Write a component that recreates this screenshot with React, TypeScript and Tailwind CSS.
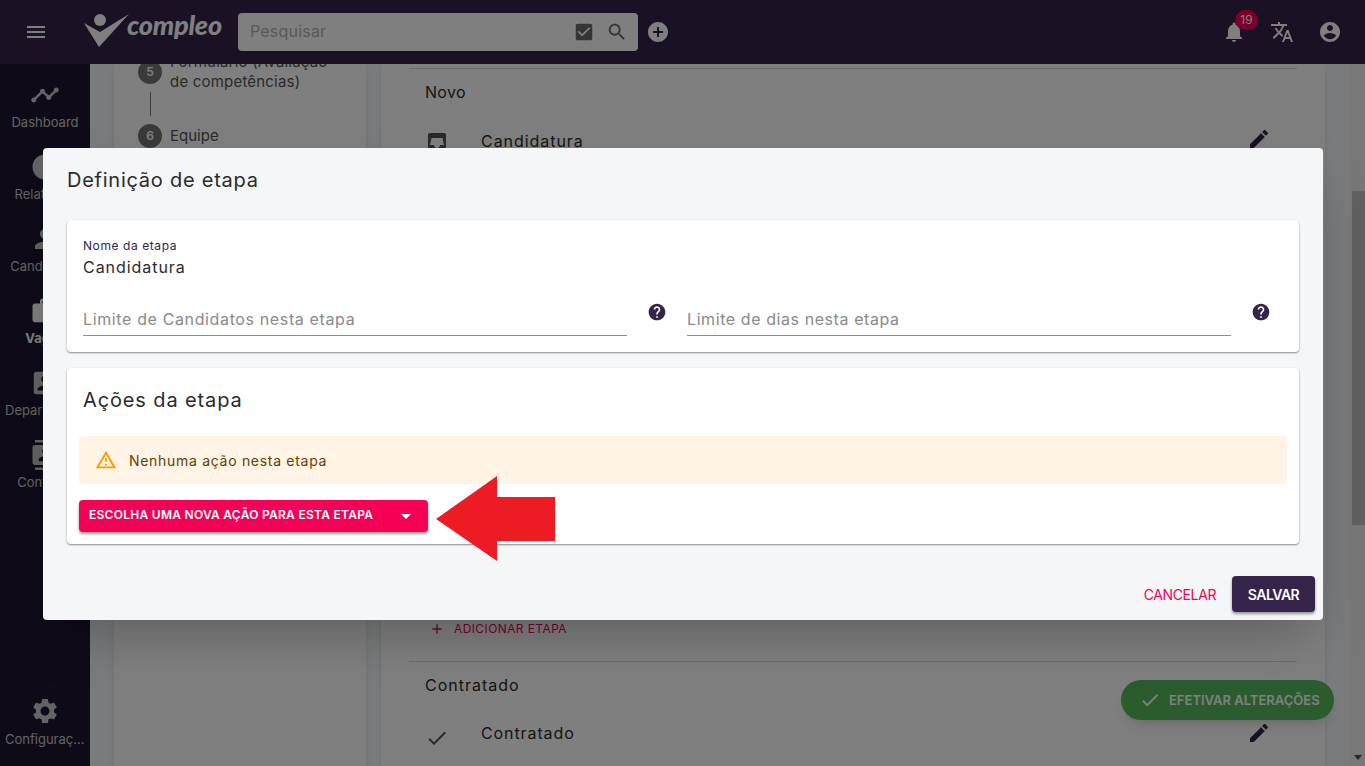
import React from "react";

const P = {
  menu: "M3 18h18v-2H3v2zm0-5h18v-2H3v2zm0-7v2h18V6H3z",
  checkBox: "M19 3H5c-1.11 0-2 .9-2 2v14c0 1.1.89 2 2 2h14c1.11 0 2-.9 2-2V5c0-1.1-.89-2-2-2zm-9 14l-5-5 1.41-1.41L10 14.17l7.59-7.59L19 8l-9 9z",
  search: "M15.5 14h-.79l-.28-.27C15.41 12.59 16 11.11 16 9.5 16 5.91 13.09 3 9.5 3S3 5.91 3 9.5 5.91 16 9.5 16c1.61 0 3.09-.59 4.23-1.57l.27.28v.79l5 4.99L20.49 19l-4.99-5zm-6 0C7.01 14 5 11.99 5 9.5S7.01 5 9.5 5 14 7.01 14 9.5 11.99 14 9.5 14z",
  addCircle: "M12 2C6.48 2 2 6.48 2 12s4.48 10 10 10 10-4.48 10-10S17.52 2 12 2zm5 11h-4v4h-2v-4H7v-2h4V7h2v4h4v2z",
  bell: "M12 22c1.1 0 2-.9 2-2h-4c0 1.1.89 2 2 2zm6-6v-5c0-3.07-1.64-5.64-4.5-6.32V4c0-.83-.67-1.5-1.5-1.5s-1.5.67-1.5 1.5v.68C7.63 5.36 6 7.92 6 11v5l-2 2v1h16v-1l-2-2z",
  translate: "M12.87 15.07l-2.54-2.51.03-.03c1.74-1.94 2.98-4.17 3.71-6.53H17V4h-7V2H8v2H1v1.99h11.17C11.5 7.92 10.44 9.75 9 11.35 8.07 10.32 7.3 9.19 6.69 8h-2c.73 1.63 1.73 3.17 2.98 4.56l-5.09 5.02L4 19l5-5 3.11 3.11.76-2.04zM18.5 10h-2L12 22h2l1.12-3h4.75L21 22h2l-4.5-12zm-2.62 7l1.62-4.33L19.12 17h-3.24z",
  account: "M12 2C6.48 2 2 6.48 2 12s4.48 10 10 10 10-4.48 10-10S17.52 2 12 2zm0 3c1.66 0 3 1.34 3 3s-1.34 3-3 3-3-1.34-3-3 1.34-3 3-3zm0 14.2c-2.5 0-4.71-1.28-6-3.22.03-1.99 4-3.08 6-3.08 1.99 0 5.97 1.09 6 3.08-1.29 1.94-3.5 3.22-6 3.22z",
  timeline: "M23 8c0 1.1-.9 2-2 2-.18 0-.35-.02-.51-.07l-3.56 3.55c.05.16.07.34.07.52 0 1.1-.9 2-2 2s-2-.9-2-2c0-.18.02-.36.07-.52l-2.55-2.55c-.16.05-.34.07-.52.07s-.36-.02-.52-.07l-4.55 4.56c.05.16.07.33.07.51 0 1.1-.9 2-2 2s-2-.9-2-2 .9-2 2-2c.18 0 .35.02.51.07l4.56-4.55C8.02 9.36 8 9.18 8 9c0-1.1.9-2 2-2s2 .9 2 2c0 .18-.02.36-.07.52l2.55 2.55c.16-.05.34-.07.52-.07s.36.02.52.07l3.55-3.56C19.02 8.35 19 8.18 19 8c0-1.1.9-2 2-2s2 .9 2 2z",
  pie: "M11 2v20c-5.07-.5-9-4.79-9-10s3.93-9.5 9-10zm2.03 0v8.99H22c-.47-4.74-4.24-8.52-8.97-8.99zm0 11.01V22c4.74-.47 8.5-4.25 8.97-8.99h-8.97z",
  person: "M12 12c2.21 0 4-1.79 4-4s-1.79-4-4-4-4 1.79-4 4 1.79 4 4 4zm0 2c-2.67 0-8 1.34-8 4v2h16v-2c0-2.66-5.33-4-8-4z",
  work: "M20 6h-4V4c0-1.11-.89-2-2-2h-4c-1.11 0-2 .89-2 2v2H4c-1.11 0-1.99.89-1.99 2L2 19c0 1.11.89 2 2 2h16c1.11 0 2-.89 2-2V8c0-1.11-.89-2-2-2zm-6 0h-4V4h4v2z",
  accountBox: "M3 5v14c0 1.1.89 2 2 2h14c1.1 0 2-.9 2-2V5c0-1.1-.9-2-2-2H5c-1.11 0-2 .9-2 2zm12 4c0 1.66-1.34 3-3 3s-3-1.34-3-3 1.34-3 3-3 3 1.34 3 3zm-9 8c0-2 4-3.1 6-3.1s6 1.1 6 3.1v1H6v-1z",
  contacts: "M20 0H4v2h16V0zM4 24h16v-2H4v2zM20 4H4c-1.1 0-2 .9-2 2v12c0 1.1.9 2 2 2h16c1.1 0 2-.9 2-2V6c0-1.1-.9-2-2-2zm-8 2.75c1.24 0 2.25 1.01 2.25 2.25s-1.01 2.25-2.25 2.25S9.75 10.24 9.75 9 10.76 6.75 12 6.75zM17 17H7v-1.5c0-1.67 3.33-2.5 5-2.5s5 .83 5 2.5V17z",
  settings: "M19.14 12.94c.04-.3.06-.61.06-.94 0-.32-.02-.64-.07-.94l2.03-1.58c.18-.14.23-.41.12-.61l-1.92-3.32c-.12-.22-.37-.29-.59-.22l-2.39.96c-.5-.38-1.03-.7-1.62-.94l-.36-2.54c-.04-.24-.24-.41-.48-.41h-3.84c-.24 0-.43.17-.47.41l-.36 2.54c-.59.24-1.13.57-1.62.94l-2.39-.96c-.22-.08-.47 0-.59.22L2.74 8.87c-.12.21-.08.47.12.61l2.03 1.58c-.05.3-.09.63-.09.94s.02.64.07.94l-2.03 1.58c-.18.14-.23.41-.12.61l1.92 3.32c.12.22.37.29.59.22l2.39-.96c.5.38 1.03.7 1.62.94l.36 2.54c.05.24.24.41.48.41h3.84c.24 0 .44-.17.47-.41l.36-2.54c.59-.24 1.13-.56 1.62-.94l2.39.96c.22.08.47 0 .59-.22l1.92-3.32c.12-.22.07-.47-.12-.61l-2.01-1.58zM12 15.6c-1.98 0-3.6-1.62-3.6-3.6s1.62-3.6 3.6-3.6 3.6 1.62 3.6 3.6-1.62 3.6-3.6 3.6z",
  edit: "M3 17.25V21h3.75L17.81 9.94l-3.75-3.75L3 17.25zM20.71 7.04c.39-.39.39-1.02 0-1.41l-2.34-2.34c-.39-.39-1.02-.39-1.41 0l-1.83 1.83 3.75 3.75 1.83-1.83z",
  inbox: "M19 3H5c-1.1 0-2 .9-2 2v14c0 1.1.9 2 2 2h14c1.1 0 2-.9 2-2V5c0-1.1-.9-2-2-2zm-1.5 5 1.5 7h-4c0 1.66-1.35 3-3 3s-3-1.34-3-3H5l1.5-7z",
  help: "M12 2C6.48 2 2 6.48 2 12s4.48 10 10 10 10-4.48 10-10S17.52 2 12 2zm1 17h-2v-2h2v2zm2.07-7.75l-.9.92C13.45 12.9 13 13.5 13 15h-2v-.5c0-1.1.45-2.1 1.17-2.83l1.24-1.26c.37-.36.59-.86.59-1.41 0-1.1-.9-2-2-2s-2 .9-2 2H8c0-2.21 1.79-4 4-4s4 1.79 4 4c0 .88-.36 1.68-.93 2.25z",
  warning: "M12 5.99L19.53 19H4.47L12 5.99M12 2L1 21h22L12 2zm1 14h-2v2h2v-2zm0-6h-2v4h2v-4z",
  check: "M9 16.17L4.83 12l-1.42 1.41L9 19 21 7l-1.41-1.41z",
  drop: "M7 10l5 5 5-5z",
  add: "M19 13h-6v6h-2v-6H5v-2h6V5h2v6h6v2z",
};

const Icon = ({ d, className }: { d: string; className: string }) => (
  <svg viewBox="0 0 24 24" fill="currentColor" className={className}>
    <path d={d} />
  </svg>
);

const navItems = [
  { icon: P.timeline, label: "Dashboard", active: false },
  { icon: P.pie, label: "Relatórios", active: false },
  { icon: P.person, label: "Candidatos", active: false },
  { icon: P.work, label: "Vagas", active: true },
  { icon: P.accountBox, label: "Departamentos", active: false },
  { icon: P.contacts, label: "Contatos", active: false },
];

const Header = () => (
  <header className="h-16 shrink-0 bg-[#352349] flex items-center text-white relative z-10">
    <div className="w-[84px] shrink-0 flex justify-center pr-[12px]">
      <Icon d={P.menu} className="w-6 h-6" />
    </div>
    <div className="w-[154px] shrink-0 flex items-center">
      <svg viewBox="0 0 46 38" className="w-[46px] h-[38px] -mt-1" fill="currentColor">
        <circle cx="16" cy="9" r="6" />
        <path d="M0 12 L16 21 L45 3 L15 36 Z" />
      </svg>
      <span className="font-['Lato'] italic font-black text-[27px] leading-none -mt-4 -ml-[3px] tracking-[-0.2px]">compleo</span>
    </div>
    <div className="w-[400px] h-[38px] bg-white rounded flex items-center pl-3 pr-[10px] shadow">
      <span className="flex-1 text-[#b0b0b0] text-[16px] tracking-[0.2px] -mt-[2px]">Pesquisar</span>
      <Icon d={P.checkBox} className="w-[22px] h-[22px] text-[#6a6a6a] mr-[11px]" />
      <Icon d={P.search} className="w-[22px] h-[22px] text-[#6a6a6a]" />
    </div>
    <Icon d={P.addCircle} className="w-6 h-6 ml-2" />
    <div className="flex-1" />
    <div className="relative w-6 h-6 mr-6">
      <Icon d={P.bell} className="w-6 h-6" />
      <span className="absolute -top-[10px] left-[13px] w-[23px] h-5 rounded-full bg-[#f50057] text-[12px] leading-5 text-center">19</span>
    </div>
    <Icon d={P.translate} className="w-6 h-6 mr-[24px]" />
    <Icon d={P.account} className="w-6 h-6 mr-[23px]" />
  </header>
);

const Sidebar = () => (
  <nav className="w-[90px] shrink-0 bg-[#1f1530] flex flex-col items-center text-white pt-4 pb-[19px]">
    {navItems.map((item) => (
      <div key={item.label} className="h-[72px] flex flex-col items-center">
        <Icon d={item.icon} className={item.active ? "w-[30px] h-[30px] mb-1" : "w-[30px] h-[30px] mb-1 text-[#c8c8c8]"} />
        <span className={item.active ? "w-20 truncate text-center text-[13px] leading-4 font-bold" : "w-20 truncate text-center text-[13px] leading-4 text-[#c8c8c8]"}>{item.label}</span>
      </div>
    ))}
    <div className="flex-1" />
    <div className="flex flex-col items-center w-full">
      <Icon d={P.settings} className="w-[30px] h-[30px] mb-[5px] text-[#c8c8c8]" />
      <span className="w-20 truncate text-center text-[13px] leading-4 text-[#c8c8c8]">Configurações</span>
    </div>
  </nav>
);

const Background = () => (
  <main className="flex-1 min-w-0 bg-[#f4f6f8] flex pl-6 pr-[25px] gap-[15px] overflow-hidden">
    <section className="w-[252px] shrink-0 bg-white shadow-md pl-6 text-[#555] text-[15px]">
      <div className="flex gap-[8px] -mt-[8px]">
        <span className="w-6 h-6 mt-[4px] rounded-full bg-[#757575] text-white text-[12px] font-semibold flex items-center justify-center shrink-0">5</span>
        <p className="leading-5 -mt-1 tracking-[0.2px] whitespace-nowrap">Formulário (Avaliação<br />de competências)</p>
      </div>
      <div className="w-px h-6 bg-[#777] ml-3" />
      <div className="flex items-center gap-[8px] mt-2">
        <span className="w-6 h-6 rounded-full bg-[#757575] text-white text-[12px] font-semibold flex items-center justify-center">6</span>
        <span>Equipe</span>
      </div>
    </section>
    <section className="flex-1 min-w-0 bg-white shadow-md px-7 pt-[4px] text-[#2b2b2b]">
      <div className="border-t border-[#d8d8d8] pl-4 pt-[13px]">
        <p className="text-[16px] leading-5 tracking-[0.3px]">Novo</p>
        <div className="flex items-center mt-[25px] h-6 pr-[26px]">
          <Icon d={P.inbox} className="w-6 h-6 text-[#555] mt-[6px]" />
          <span className="ml-8 text-[16px] tracking-[0.95px] mt-1 flex-1">Candidatura</span>
          <Icon d={P.edit} className="w-6 h-6 text-[#352349]" />
        </div>
      </div>
      <div className="h-[468px]" />
      <div className="flex items-center pl-[20px] h-5 text-[#f50057] text-[12px]">
        <Icon d={P.add} className="w-[16px] h-[16px] mr-[9px]" />
        <span className="tracking-[0.4px]">ADICIONAR ETAPA</span>
      </div>
      <div className="border-t border-[#d8d8d8] mt-[22px] pl-4 pt-[13px]">
        <p className="text-[16px] leading-5 tracking-[1px]">Contratado</p>
        <div className="flex items-center mt-[26px] h-6 pr-[26px]">
          <Icon d={P.check} className="w-6 h-6 text-[#555] mt-[10px]" />
          <span className="ml-8 text-[16px] tracking-[0.9px] flex-1">Contratado</span>
          <Icon d={P.edit} className="w-6 h-6 text-[#352349]" />
        </div>
      </div>
    </section>
  </main>
);

const Scrollbar = () => (
  <div className="w-[15px] shrink-0 bg-[#f1f1f1] flex flex-col items-center">
    <div className="w-[13px] h-[334px] bg-[#c1c1c1] mt-[127px] ml-px" />
    <div className="flex-1" />
    <div className="w-0 h-0 border-x-[4px] border-x-transparent border-t-[5px] border-t-[#505050] mb-[6px]" />
  </div>
);

const Field = ({ label, spacing }: { label: string; spacing: string }) => (
  <div className="flex-1 flex">
    <div className={`flex-1 h-[31px] border-b border-[#8d8d8d] text-[16px] text-[#8a8a8a] leading-6 pt-[2px] ${spacing}`}>{label}</div>
    <div className="w-[60px] -mt-[3px] flex justify-center">
      <Icon d={P.help} className="w-5 h-5 text-[#352349]" />
    </div>
  </div>
);

const Dialog = () => (
  <div className="w-[1280px] h-[472px] bg-[#f4f6f8] rounded shadow-2xl px-6 flex flex-col text-[#2b2b2b]">
    <h2 className="text-[20px] leading-8 mt-4 tracking-[0.75px]">Definição de etapa</h2>
    <div className="bg-white rounded shadow-[0_1px_2px_rgba(0,0,0,0.45)] h-[132px] mt-6 px-4 pt-[18px] shrink-0">
      <p className="text-[12px] leading-4 text-[#352349] tracking-[0.58px]">Nome da etapa</p>
      <p className="text-[16px] leading-6 mt-[1px] tracking-[0.95px]">Candidatura</p>
      <div className="flex mt-[26px] -mr-2">
        <Field label="Limite de Candidatos nesta etapa" spacing="tracking-[0.63px]" />
        <Field label="Limite de dias nesta etapa" spacing="tracking-[0.58px]" />
      </div>
    </div>
    <div className="bg-white rounded shadow-[0_1px_2px_rgba(0,0,0,0.45)] h-[176px] mt-4 px-3 shrink-0">
      <h3 className="text-[20px] leading-8 mt-4 pl-1 tracking-[0.87px]">Ações da etapa</h3>
      <div className="h-12 mt-5 bg-[#fff4e5] rounded flex items-center pl-4 text-[14px] text-[#663c00] tracking-[0.7px]">
        <Icon d={P.warning} className="w-[22px] h-[22px] text-[#ff9800] mr-[12px]" />
        Nenhuma ação nesta etapa
      </div>
      <div className="w-[349px] h-8 mt-4 bg-[#f50057] rounded shadow-[0_2px_3px_rgba(0,0,0,0.4)] flex items-center text-white">
        <span className="w-[305px] h-full pl-[10px] pt-[6px] text-[12px] font-semibold border-r border-[#d80050] tracking-[0.27px]">ESCOLHA UMA NOVA AÇÃO PARA ESTA ETAPA</span>
        <Icon d={P.drop} className="w-6 h-6 ml-[10px]" />
      </div>
    </div>
    <div className="flex items-center justify-end mt-8 -mr-4 gap-4">
      <span className="text-[14px] text-[#f50057] tracking-[-0.4px]">CANCELAR</span>
      <span className="w-[83px] h-9 bg-[#352349] rounded text-white text-[14px] font-semibold tracking-[-0.5px] flex items-center justify-center shadow-[0_2px_3px_rgba(0,0,0,0.4)]">SALVAR</span>
    </div>
  </div>
);

export default function App() {
  return (
    <div className="relative h-[766px] w-[1365px] overflow-hidden flex flex-col font-['Inter','Noto_Sans',sans-serif]">
      <Header />
      <div className="flex-1 min-h-0 flex">
        <Sidebar />
        <Background />
        <Scrollbar />
      </div>
      {/* botão flutuante */}
      <div className="absolute left-[1121px] top-[680px] w-[213px] h-10 rounded-full bg-[#55b85a] shadow-lg flex items-center pl-[18px] text-white text-[13px] font-semibold z-10">
        <Icon d={P.check} className="w-[22px] h-[22px] mr-[8px]" />
        <span className="mt-[2px]">EFETIVAR ALTERAÇÕES</span>
      </div>
      {/* overlay do modal */}
      <div className="absolute inset-0 z-20 bg-black/50 pl-[43px] pt-[148px]">
        <Dialog />
      </div>
      <svg className="absolute left-[436px] top-[476px] w-[120px] h-[86px] z-30" viewBox="0 0 120 86" fill="#ed1c24">
        <polygon points="0,43 61,0 61,21 119,21 119,65 61,65 61,85" />
      </svg>
    </div>
  );
}
